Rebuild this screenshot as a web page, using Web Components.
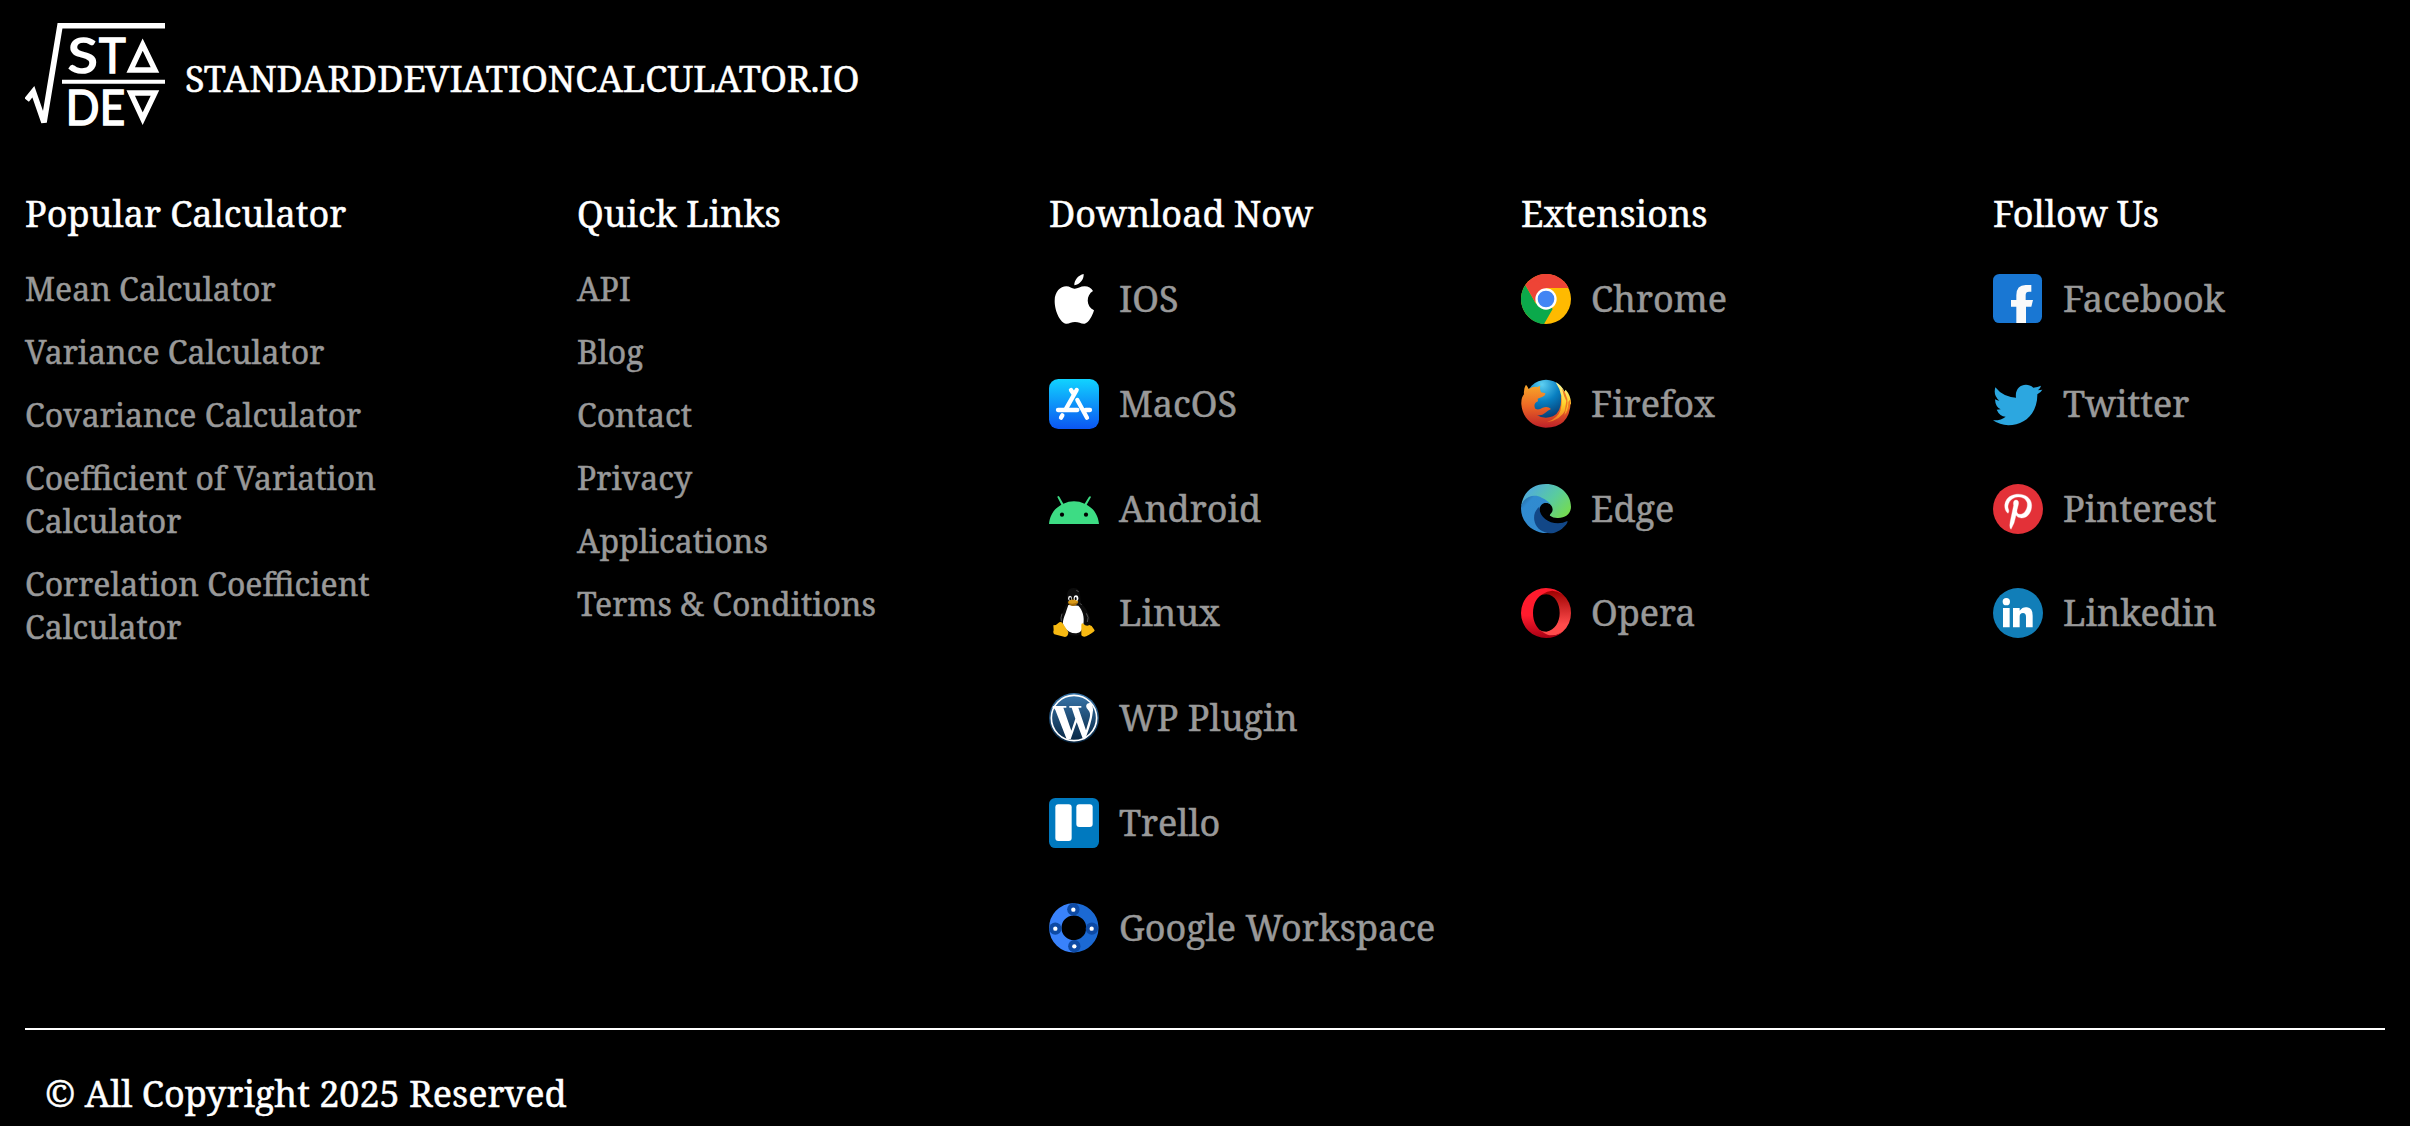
<!DOCTYPE html>
<html lang="en">
<head>
<meta charset="utf-8">
<title>Standard Deviation Calculator</title>
<style>
html,body{margin:0;background:#000}
body{font-family:"Noto Serif","Droid Serif","DejaVu Serif Condensed","DejaVu Serif",serif;color:#fff;-webkit-text-stroke:.5px currentColor}
</style>
</head>
<body>
<site-footer></site-footer>
<script>
const ICONS = {
ios:['27 42 150 150','<path fill="#fff" d="M131 42C132 58 120 73 103 76C102 60 116 45 131 42ZM103 86C112 87 121 79 134 79C145 79 154 85 159 93C138 105 137 139 162 151C158 166 146 189 134 191C123 192 117 186 105 186C94 186 87 192 78 191C62 189 44 156 44 123C44 95 61 79 79 79C89 79 96 86 103 86Z"/>'],
macos:['27 357 150 150','<defs><linearGradient id="g" x2="0" y2="1"><stop stop-color="#11d3ff"/><stop offset="1" stop-color="#0b55f2"/></linearGradient></defs><rect x="27" y="357" width="150" height="150" rx="28" fill="url(#g)"/><g stroke="#fff" stroke-width="13" stroke-linecap="round"><path d="M110 390L77 448M67 466L63 473M93 390L100 401M112 420L141 473M54 450H112M137 450H150"/></g>'],
android:['27 42 150 150','<path fill="#3ddc84" d="M27 162C29 137 42 116 64 104L52 81Q54 76 58 80L70 101Q102 87 134 101L147 80Q151 77 153 81L140 104C162 116 175 137 177 162Z"/><circle cx="66" cy="134" r="6.3"/><circle cx="138" cy="134" r="6.3"/>'],
linux:['27 357 150 150','<path fill="#0c0c0c" d="M101 357C82 357 80 373 82 390C84 407 67 424 65 443C58 466 67 482 82 495Q103 503 120 497L149 471C157 448 139 417 125 405C118 398 128 357 101 357Z"/><path fill="#fff" d="M85 408L115 410C128 424 134 443 130 467Q128 489 109 493Q87 494 73 475C62 458 76 439 79 425Z"/><ellipse cx="90" cy="388" rx="6" ry="8" fill="#e9e9e9"/><ellipse cx="108" cy="388" rx="7" ry="9" fill="#fff"/><ellipse cx="91" cy="389" rx="3" ry="4.5"/><ellipse cx="107" cy="389" rx="3" ry="5"/><path fill="#d99916" d="M84 398Q98 385 114 397Q118 402 101 411Q85 409 84 398Z"/><path fill="#a26b0a" d="M86 402Q100 407 114 399Q109 412 98 411Q89 409 86 402Z"/><path fill="#f7b912" d="M58 460Q65 456 70 466L85 489Q85 502 75 504L43 496Q38 491 41 484L40 469Q50 469 58 460ZM124 467Q126 460 130 464Q139 474 148 468L155 471L164 484Q163 489 146 498Q131 508 124 499Z"/><path stroke="#666" stroke-width="2.500" fill="none" d="M109 364L116 368M120 403L125 408M139 433Q148 445 142 459M66 434Q61 447 64 457"/>'],
wp:['27 39 150 150','<defs><linearGradient id="g" x2="0" y2="1"><stop stop-color="#3977ac"/><stop offset="1" stop-color="#062440"/></linearGradient></defs><circle cx="102" cy="114" r="75" fill="url(#g)"/><circle cx="102" cy="114" r="68" fill="none" stroke="#fff" stroke-width="5"/><path fill="#fff" d="M39 78H79V83H70L94 152L106 116L95 83H88V78H124V83H115L138 151L148 117C153 102 149 95 143 88C134 78 140 67 152 69Q162 80 158 99C156 118 147 149 135 178H129L110 127L92 178H80L46 90Q43 83 37 83Z"/>'],
trello:['27 354 150 150','<rect x="27" y="354" width="150" height="150" rx="19" fill="#0079bf"/><rect x="46" y="373" width="49" height="110" rx="9" fill="#fff"/><rect x="109" y="373" width="49" height="68" rx="9" fill="#fff"/>'],
google:['27 669 150 150','<path d="M100 688A55.5 55.5 0 0 0 103 799" stroke="#3982fb" stroke-width="37" fill="none"/><path d="M100 688A55.5 55.5 0 1 1 103 799" stroke="#1b69d3" stroke-width="37" fill="none"/><g fill="#0d4aa5"><circle cx="100" cy="688" r="18.5"/><circle cx="46" cy="746" r="18.5"/><circle cx="155.5" cy="746" r="18.5"/><circle cx="103" cy="798.5" r="18.5"/></g><g fill="#fff"><circle cx="100" cy="689" r="6.5"/><circle cx="46" cy="746" r="6.5"/><circle cx="155" cy="746" r="6.5"/><circle cx="103" cy="799" r="6.5"/></g>'],
chrome:['33 42 150 150','<circle cx="108" cy="117" r="75" fill="#ffba00"/><path fill="#ee4436" d="M108 117L46 75A75 75 0 0 1 176 84H108Z"/><path fill="#0ba94b" d="M108 117L128 147L102 192A75 75 0 0 1 46 75L78 131Z"/><path fill="#ee4436" d="M46 75L75 126L108 84L80 60Z"/><circle cx="108" cy="117" r="32" fill="#fff"/><circle cx="108" cy="117" r="25" fill="#4285f4"/>'],
firefox:['33 357 150 150','<defs><linearGradient id="g" x2="0" y2="1"><stop stop-color="#f8a72a"/><stop offset=".5" stop-color="#ec6724"/><stop offset="1" stop-color="#bd2029"/></linearGradient><radialGradient id="b" cx=".4" cy=".12" r=".95"><stop stop-color="#5ed0f2"/><stop offset=".45" stop-color="#087fc1"/><stop offset="1" stop-color="#062d61"/></radialGradient><linearGradient id="y" x2="0" y2="1"><stop stop-color="#fff79b"/><stop offset=".55" stop-color="#ffd129"/><stop offset="1" stop-color="#ee6c20"/></linearGradient></defs><circle cx="108" cy="419" r="60" fill="url(#b)"/><path fill="url(#g)" d="M48 374Q54 381 56 387Q68 379 81 381Q87 379 91 377Q88 386 93 397L106 400Q107 406 96 411L83 416L84 424Q68 431 76 446Q85 452 98 443Q113 437 123 447Q113 452 105 459Q93 470 80 464Q101 480 129 469Q157 455 153 407Q168 422 163 448L177 421L182 428Q181 464 160 486Q141 503 107 503C69 502 37 475 34 433Q33 413 42 403Q40 386 48 374Z"/><path fill="url(#y)" d="M137 367Q156 377 163 395L167 389Q184 408 183 434L175 424Q178 451 163 464L168 448Q151 482 110 487Q144 474 151 452Q157 430 154 408Q150 386 137 367Z"/><path fill="#ef7a22" d="M156 385L162 407L169 423L163 458Q175 440 172 417Q168 399 156 385ZM178 421L171 453L162 468Q180 451 182 421Z"/>'],
edge:['33 42 150 150','<defs><linearGradient id="g" x1="0" y1=".2" x2="1" y2=".8"><stop stop-color="#4fa6e6"/><stop offset=".55" stop-color="#59cba0"/><stop offset="1" stop-color="#76dc4d"/></linearGradient><linearGradient id="b" x2="1" y2="1"><stop stop-color="#235f93"/><stop offset=".2" stop-color="#308bd0"/><stop offset="1" stop-color="#3488cd"/></linearGradient></defs><path fill="url(#g)" d="M34 106C39 66 70 42 108 42C151 42 183 74 183 110C183 133 164 145 142 144Q129 144 120 137Q118 134 124 129C133 119 126 97 105 98L63 82Q42 88 34 108Z"/><path fill="url(#b)" d="M34 106C42 81 72 70 95 83Q115 92 125 106C112 91 91 98 88 119C86 146 112 181 139 184C85 204 32 165 33 113Z"/><path fill="#124787" d="M88 110C87 139 113 160 144 160Q159 160 172 153Q174 157 168 164C147 189 122 194 105 187C70 176 61 132 88 110Z"/>'],
opera:['33 357 150 150','<defs><linearGradient id="g" x2="0" y2="1"><stop stop-color="#ff1b2d"/><stop offset=".55" stop-color="#ff1b2d"/><stop offset="1" stop-color="#a70014"/></linearGradient><linearGradient id="r" x2="0" y2="1"><stop stop-color="#9c0000"/><stop offset=".75" stop-color="#ff4b4b"/></linearGradient></defs><path fill="url(#r)" d="M86 382Q98 363 124 364Q145 365 158 376Q183 398 183 432Q183 466 158 488Q143 502 108 501L86 482Q97 488 109 488C136 483 149 458 149 432C149 405 136 378 109 376Q97 376 86 382Z"/><path fill="url(#g)" d="M158 376Q136 357 108 357A75 75 0 0 0 108 507Q137 507 158 488Q124 510 97 488C81 480 69 458 69 432C69 405 81 385 97 376Q126 355 158 376Z"/>'],
facebook:['39 42 150 150','<rect x="39" y="42" width="147" height="147" rx="19" fill="#1977d3"/><path fill="#fafafa" d="M109 189V140H93V120H109V106Q109 75 137 75H154V95H147Q137 95 137 105V120H159L154 140H138V189Z"/>'],
twitter:['39 357 150 150','<path fill="#2ca7e0" d="M46 382Q69 411 108 413C103 378 138 364 160 383Q173 382 183 377Q181 386 174 391L187 389Q182 398 172 403C173 461 133 496 85 496Q59 495 39 481Q64 482 77 470Q59 469 50 449L62 448Q46 441 45 418Q52 422 58 422Q39 407 46 382Z"/>'],
pinterest:['39 42 150 150','<circle cx="114" cy="117" r="75" fill="#e33138"/><path fill="#fff" stroke="#fff" d="M84 130C69 119 71 89 92 78C116 65 155 75 155 106C155 129 141 145 124 144Q113 144 108 136Q104 160 93 178Q87 173 91 153L101 106Q98 91 108 90Q118 91 115 104C112 118 107 127 115 132C134 139 146 110 141 97C134 76 98 75 87 98C78 116 92 119 84 130Z"/>'],
linkedin:['39 357 150 150','<circle cx="114" cy="432" r="75" fill="#117eb8"/><g fill="#fff"><circle cx="79" cy="398" r="11"/><path d="M69 417H89V475H69ZM99 417H119V425Q128 413 141 415Q158 416 158 440V475H138V444Q138 432 129 432Q119 432 119 443V475H99Z"/></g>']
};
const LOGO = `<svg width="140" height="123" viewBox="30 39 420 369" fill="none" stroke="#fff"><path stroke-width="17" d="M35 270L55 245L87 337L135 47H450"/><path stroke-width="12" d="M141 215H450"/><path stroke-width="16" d="M383 104L347 180H420Z M347 249H420L383 326Z"/><g fill="#fff" stroke="#fff" stroke-width="5" font-family="Lato" font-size="146"><text x="158" y="188" textLength="90" lengthAdjust="spacingAndGlyphs">S</text><text x="252" y="188" textLength="80" lengthAdjust="spacingAndGlyphs">T</text><text x="152" y="344" textLength="101" lengthAdjust="spacingAndGlyphs">D</text><text x="254" y="344" textLength="76" lengthAdjust="spacingAndGlyphs">E</text></g></svg>`;

function define(name, render){
  customElements.define(name, class extends HTMLElement{
    connectedCallback(){
      if(this.shadowRoot) return;
      this.attachShadow({mode:'open'}).innerHTML = render(this);
    }
  });
}
define('brand-icon', el => {
  const [box, art] = ICONS[el.getAttribute('name')];
  return `<style>:host{display:block;width:50px;height:50px;flex:none}svg{display:block}</style><svg width="50" height="50" viewBox="${box}">${art}</svg>`;
});
define('text-link', () => `<style>:host{display:block;font-size:32px;line-height:43px;color:#999}</style><slot></slot>`);
define('icon-link', el => `<style>:host{display:flex;gap:20px;align-items:center;height:50px;font-size:36px;line-height:50px;color:#999;white-space:nowrap}</style><brand-icon name="${el.getAttribute('icon')}"></brand-icon><span><slot></slot></span>`);
define('link-column', el => `<style>:host{display:block}h2{margin:0;font-weight:400;font-size:36px;line-height:50px;white-space:nowrap}
.list{display:flex;flex-direction:column;margin-top:${el.hasAttribute('icons')?35:28}px;gap:${el.hasAttribute('icons')?54.8:20}px}</style><h2>${el.getAttribute('heading')}</h2><div class="list"><slot></slot></div>`);
define('site-footer', () => {
  const t = a => a.map(x=>`<text-link>${x}</text-link>`).join('');
  const i = a => a.map(([n,x])=>`<icon-link icon="${n}">${x}</icon-link>`).join('');
  return `<style>:host{display:block;box-sizing:border-box;height:1126px;padding:23px 25px 0;overflow:hidden}
.brand{display:flex;gap:20px;height:103px;font-size:36px;line-height:50px;align-items:flex-start}.brand svg{display:block;flex:none}
.brand span{margin-top:31px}
.cols{display:grid;grid-template-columns:552px 472px 472px 472px 392px;height:839px;margin-top:63px}
.first{width:380px}
.copy{border-top:2px solid #fff;padding:39px 20px 0;font-size:36px;line-height:50px}</style>
<div class="brand">${LOGO}<span>STANDARDDEVIATIONCALCULATOR.IO</span></div>
<div class="cols">
<link-column class="first" heading="Popular Calculator">${t(['Mean Calculator','Variance Calculator','Covariance Calculator','Coefficient of Variation Calculator','Correlation Coefficient Calculator'])}</link-column>
<link-column heading="Quick Links">${t(['API','Blog','Contact','Privacy','Applications','Terms &amp; Conditions'])}</link-column>
<link-column icons heading="Download Now">${i([['ios','IOS'],['macos','MacOS'],['android','Android'],['linux','Linux'],['wp','WP Plugin'],['trello','Trello'],['google','Google Workspace']])}</link-column>
<link-column icons heading="Extensions">${i([['chrome','Chrome'],['firefox','Firefox'],['edge','Edge'],['opera','Opera']])}</link-column>
<link-column icons heading="Follow Us">${i([['facebook','Facebook'],['twitter','Twitter'],['pinterest','Pinterest'],['linkedin','Linkedin']])}</link-column>
</div>
<div class="copy">© All Copyright 2025 Reserved</div>`;
});
</script>
</body>
</html>
